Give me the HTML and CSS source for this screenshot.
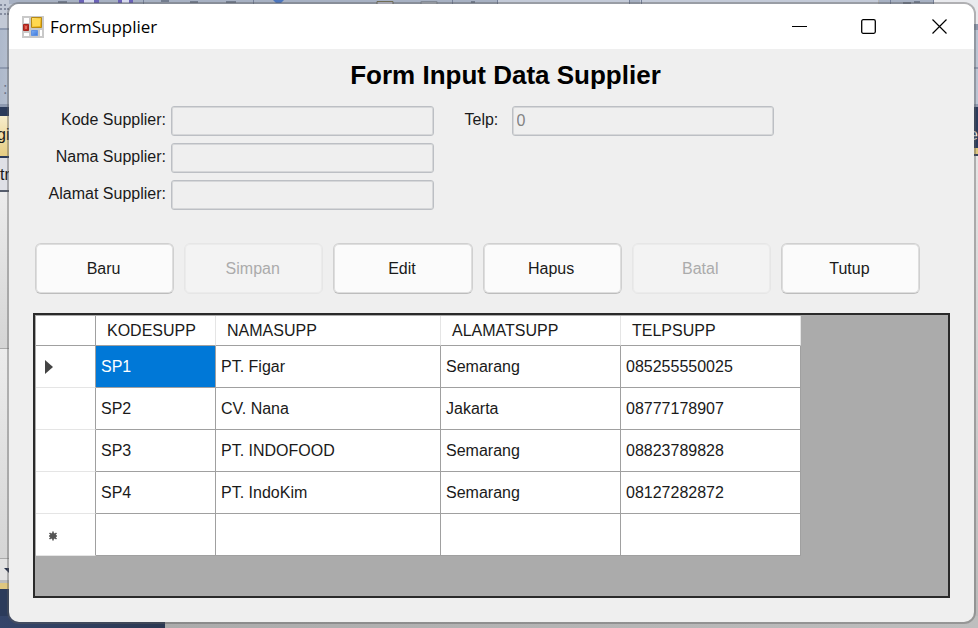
FILE: index.html
```html
<!DOCTYPE html>
<html lang="id">
<head>
<meta charset="utf-8">
<title>FormSupplier</title>
<link rel="stylesheet" href="styles.css">
</head>
<body>
<div class="desktop" aria-hidden="true">
  <div class="edge edge-left">
    <div class="tools"><svg width="9" height="20" viewBox="0 0 9 20"><path d="M0 5h2M4 5h2M0 9h2M4 9h2M7 9h2M0 14h2M4 14h2M7 14h2" stroke="#858da0" stroke-width="2"/></svg></div>
    <div class="bar"></div>
    <div class="bar grip">:</div>
    <div class="navy tabs"></div>
    <div class="tab">gi</div>
    <div class="combo">tr</div>
    <div class="paper short"></div>
    <div class="paper long"></div>
    <div class="arrow"><svg width="9" height="16" viewBox="0 0 9 16"><path d="M4 4h9l-4 5z" fill="#25304a"/></svg></div>
    <div class="gold"></div>
    <div class="navy fill"></div>
  </div>
  <svg class="toolbar" width="978" height="4" viewBox="0 0 978 4">
    <path fill="#c3cad8" d="M253 0h625v4H253z"/>
    <path fill="#a7b1c3" d="M9 0h488v4H9zM630 0h10v4h-10zM879 0h11v4h-11z"/>
    <path fill="#e9eaee" d="M934 0h44v4h-44z"/>
    <path fill="#a7b1c3" d="M890 0h44v4h-44z"/>
    <path fill="#6a62b8" d="M79 0h20v3H79zM118 0h15v3h-15z"/>
    <path fill="#d7dbf0" d="M84 0h10v3H84zM122 0h7v3h-7z"/>
    <path fill="#4d76bd" d="M273 0h11l-3 3h-5z"/>
    <path fill="#d5d8ea" stroke="#706d56" d="M377 1.500h16V5h-16z"/>
    <path fill="#b8bfca" stroke="#828a97" d="M421 1.500h16V5h-16z"/>
    <path stroke="#76819a" d="M143.500 0v4M253.500 0v4M452.500 0v4M497.500 0v4M629.500 0v4M641.500 0v4M890.500 0v4M933.500 0v4"/>
    <path stroke="#737d8f" stroke-width="2" d="M58 2h9M161 1h8M190 2h8M226 2h10M471 2h4M903 3h8M914 2h6"/>
  </svg>
  <div class="edge edge-right">
    <div class="tools"></div>
    <div class="bar"></div>
    <div class="bar grip"></div>
    <div class="navy right-tab">e</div>
    <div class="gold"></div>
    <div class="paper fill"></div>
  </div>
  <div class="status"></div>
</div>

<main class="window">
  <header class="titlebar">
    <svg class="app-icon" width="22" height="22" viewBox="0 0 22 22" aria-hidden="true">
      <defs>
        <linearGradient id="gold" x2="1" y2="1"><stop stop-color="#ffe57a"/><stop offset="1" stop-color="#e8a800"/></linearGradient>
        <linearGradient id="red" x2="1" y2="1"><stop stop-color="#d8463a"/><stop offset="1" stop-color="#a81c14"/></linearGradient>
        <linearGradient id="blue" x2="1" y2="1"><stop stop-color="#7fb0f4"/><stop offset="1" stop-color="#3e78dc"/></linearGradient>
      </defs>
      <path fill="#c9c9c9" d="M0 0h22v22H0z"/>
      <path fill="#fff" d="M2 2h5v5H2zM2 17h5v3H2zM18 14h2v6h-2z"/>
      <path fill="url(#gold)" stroke="#b98a12" d="M9.500 1.500h10v10h-10z"/>
      <path fill="#ffd84e" d="M11 3h7v7h-7z"/>
      <path fill="url(#red)" stroke="#a3241c" d="M1.500 8.500h5v6h-5z"/>
      <path fill="#e0685c" d="M3 10h2v3H3z"/>
      <path fill="url(#blue)" stroke="#5f92e4" d="M9.500 14.500h6v5h-6z"/>
    </svg>
    <span class="caption">FormSupplier</span>
    <button class="win-btn" type="button" aria-label="Minimize"><svg width="16" height="16" viewBox="0 0 16 16"><path d="M1 7.500h15" stroke="#000"/></svg></button>
    <button class="win-btn" type="button" aria-label="Maximize"><svg width="16" height="16" viewBox="0 0 16 16"><rect x=".7" y=".7" width="13.600" height="13.600" rx="1.500" fill="none" stroke="#000" stroke-width="1.300"/></svg></button>
    <button class="win-btn" type="button" aria-label="Close"><svg width="16" height="16" viewBox="0 0 16 16"><path d="M1.500 .5l14 14M15.500 .5l-14 14" stroke="#000" stroke-width="1.200"/></svg></button>
  </header>

  <h1>Form Input Data Supplier</h1>

  <form>
    <div class="fields">
      <div class="group main-group">
        <label for="kode">Kode Supplier:</label><input id="kode" type="text" disabled>
        <label for="nama">Nama Supplier:</label><input id="nama" type="text" disabled>
        <label for="alamat">Alamat Supplier:</label><input id="alamat" type="text" disabled>
      </div>
      <div class="group phone-group">
        <label for="telp">Telp:</label><input id="telp" type="text" value="0" disabled>
      </div>
    </div>
    <div class="actions">
      <button type="button">Baru</button>
      <button type="button" disabled>Simpan</button>
      <button type="button">Edit</button>
      <button type="button">Hapus</button>
      <button type="button" disabled>Batal</button>
      <button type="button">Tutup</button>
    </div>
  </form>

  <section class="grid-view">
    <table>
      <colgroup><col class="c-head"><col class="c-kode"><col class="c-nama"><col class="c-alamat"><col class="c-telp"></colgroup>
      <thead>
        <tr><td></td><th scope="col">KODESUPP</th><th scope="col">NAMASUPP</th><th scope="col">ALAMATSUPP</th><th scope="col">TELPSUPP</th></tr>
      </thead>
      <tbody>
        <tr><td class="row-head"><svg width="10" height="16" viewBox="0 0 10 16"><path d="M1 1v14l8-7z" fill="#444"/></svg></td><td class="selected">SP1</td><td>PT. Figar</td><td>Semarang</td><td>085255550025</td></tr>
        <tr><td class="row-head"></td><td>SP2</td><td>CV. Nana</td><td>Jakarta</td><td>08777178907</td></tr>
        <tr><td class="row-head"></td><td>SP3</td><td>PT. INDOFOOD</td><td>Semarang</td><td>08823789828</td></tr>
        <tr><td class="row-head"></td><td>SP4</td><td>PT. IndoKim</td><td>Semarang</td><td>08127282872</td></tr>
        <tr><td class="row-head new"><svg width="10" height="10" viewBox="0 0 10 10"><circle cx="5" cy="5" r="3" fill="#555"/><path d="M5 .5v9M1.500 2l7 6M8.500 2l-7 6M1 5h8" stroke="#555" stroke-width="1.600"/></svg></td><td></td><td></td><td></td><td></td></tr>
      </tbody>
    </table>
  </section>
</main>
</body>
</html>
```
FILE: styles.css
```css
* {
  box-sizing: border-box;
}

body {
  margin: 0;
  min-height: 100vh;
  padding: 4px 4px 6px 9px;
  display: flex;
  position: relative;
  background: #b5b5b5;
  color: #1a1a1a;
  font: 16px/20px "Liberation Sans", Arial, sans-serif;
}

svg {
  display: block;
}

/* Application behind the dialog */
.desktop {
  position: absolute;
  inset: 0;
  overflow: hidden;
}

.edge {
  position: absolute;
  top: 0;
  bottom: 0;
  display: flex;
  flex-direction: column;
  overflow: hidden;
}

.edge-left {
  left: 0;
  width: 20px;
}

.edge-right {
  right: 0;
  width: 14px;
}

.edge > div {
  flex: none;
}

.edge > .fill {
  flex: 1;
}

.toolbar {
  position: absolute;
  top: 0;
  left: 0;
}

.tools {
  height: 28px;
  background: #c2c9d6;
}

.edge-right .tools {
  background: #e9eaee;
  border-bottom: 4px solid #8d98ad;
}

.bar {
  height: 39px;
  background: linear-gradient(90deg, #aeb9cb, #bcc5d4);
  border-top: 2px solid #8e9ab0;
}

.grip {
  height: 40px;
  padding: 10px 0 0 3px;
  color: #6b7488;
  border-bottom: 3px solid #8e9ab0;
}

.navy {
  background: #2b3b5b;
}

.tabs {
  height: 9px;
}

.tab {
  height: 42px;
  padding-top: 9px;
  background: linear-gradient(#f7edcb, #e6cd82);
  border-bottom: 2px solid #2b3b5b;
  text-indent: -3px;
}

.combo {
  height: 34px;
  padding-top: 7px;
  background: #dfe0e6;
  border-bottom: 2px solid #555c6c;
}

.paper {
  background: linear-gradient(#ececec, #d5d5d5);
}

.short {
  height: 156px;
}

.long {
  height: 210px;
  border-top: 1px solid #aaa;
}

.arrow {
  height: 25px;
  padding-top: 5px;
  background: #e2e2e2;
  border-top: 1px solid #aaa;
  border-bottom: 3px solid #bcbcbc;
}

.gold {
  height: 6px;
  background: #dfc77f;
}

.right-tab {
  height: 41px;
  padding-top: 18px;
  color: #e8e8e8;
  text-align: right;
}

.edge-right .gold {
  height: 8px;
  border-bottom: 2px solid #39445a;
}

.edge-right .fill {
  background: linear-gradient(#e6e6e6, #b8b8b8);
}

.status {
  position: absolute;
  left: 0;
  right: 0;
  bottom: 0;
  height: 12px;
  background: linear-gradient(90deg, #34456a, #2b3852 165px, #ababab 165px, #bebebe);
}

/* Dialog window */
.window {
  position: relative;
  flex: 1;
  min-width: 0;
  display: flex;
  flex-direction: column;
  padding-bottom: 24px;
  background: #efefef;
  border-radius: 10px;
  overflow: hidden;
  box-shadow: 0 0 0 2px rgba(90, 90, 90, 0.4);
}

.titlebar {
  display: flex;
  align-items: center;
  height: 45px;
  padding-left: 13px;
  background: #fff;
}

.caption {
  flex: 1;
  padding-left: 6px;
  color: #000;
  font: 17px/24px "Open Sans", "Noto Sans", sans-serif;
}

.win-btn {
  display: flex;
  align-items: center;
  justify-content: center;
  width: 70px;
  height: 45px;
  padding: 0;
  border: 0;
  background: none;
}

h1 {
  margin: 11px 0 16px;
  padding-left: 28px;
  color: #000;
  font-size: 26px;
  line-height: 30px;
  text-align: center;
}

.fields {
  display: flex;
  align-items: flex-start;
  gap: 31px;
  padding: 0 200px 0 32px;
}

.group {
  display: grid;
  gap: 7px 5px;
}

.main-group {
  flex: 1 1 130px;
  grid-template-columns: 125px minmax(0, 1fr);
  text-align: right;
}

.phone-group {
  flex: 1 1 47px;
  grid-template-columns: 42px minmax(0, 1fr);
}

label {
  line-height: 28px;
}

input {
  width: 100%;
  min-width: 0;
  height: 30px;
  padding: 0 4px;
  border: 1px solid #bcbfc4;
  border-radius: 3px;
  background: #efefef;
  box-shadow: inset 0 0 0 1px #d6d7d9;
  color: #838383;
  font: inherit;
}

.actions {
  display: grid;
  grid-template-columns: repeat(6, minmax(0, 1fr));
  gap: 10px;
  padding: 33px 54px 0 26px;
}

.actions button {
  height: 51px;
  padding: 0 2px 0 0;
  border: 1px solid #d0d0d0;
  border-bottom-color: #bdbdbd;
  border-radius: 6px;
  background: #fbfbfb;
  box-shadow: inset 0 0 0 1px #dedede;
  color: #1a1a1a;
  font: inherit;
}

.actions button:disabled {
  border-color: #e6e6e6;
  background: #f3f3f3;
  box-shadow: inset 0 0 0 1px #ebebeb;
  color: #ababab;
}

/* Data grid */
.grid-view {
  flex: 1;
  margin: 19px 24px 0;
  padding: 1px;
  border: 2px solid #2a2a2a;
  background: #ababab;
}

table {
  width: 765px;
  max-width: 100%;
  table-layout: fixed;
  border-spacing: 0;
  background: #fff;
}

.c-head {
  width: 60px;
}

.c-kode {
  width: 120px;
}

.c-nama {
  width: 225px;
}

.c-alamat,
.c-telp {
  width: 180px;
}

th,
td {
  height: 42px;
  padding: 0 5px;
  border-right: 1px solid #a0a0a0;
  border-bottom: 1px solid #a0a0a0;
  text-align: left;
  font-weight: normal;
}

thead th,
thead td {
  height: 30px;
  padding: 0 11px;
}

thead th {
  border-right-color: #e5e5e5;
}

.row-head {
  padding: 0 8px;
  border-bottom-color: #e5e5e5;
}

.new {
  padding: 3px 12px 0;
}

.selected {
  background: #0078d7;
  color: #fff;
}
```
